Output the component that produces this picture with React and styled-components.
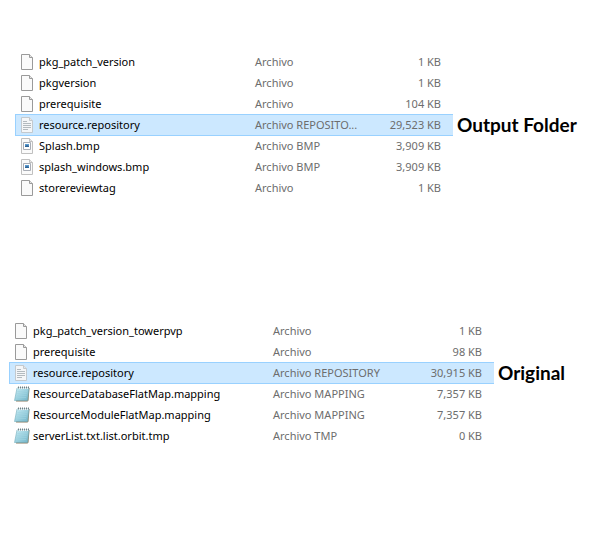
import styled, { createGlobalStyle } from "styled-components"

const GlobalStyle = createGlobalStyle`
  body {
    margin: 0;
    background: #fff;
    color: #000;
    font-family: "Noto Sans", "Open Sans", sans-serif;
    font-size: 11px;
  }
`

const Page = styled.main`
  display: flex;
  flex-direction: column;
  gap: 122px;
  padding: 51px 0;
`

const Panel = styled.section`
  display: flex;
  align-items: flex-start;
  padding-left: ${(props) => props.$inset}px;
`

const FileTable = styled.table`
  display: block;
  flex: 1;
  min-width: 0;
`

const Rows = styled.tbody`
  display: flex;
  flex-direction: column;
`

// neighbouring rows share one pixel, so the selection border overlaps them
const Row = styled.tr`
  display: flex;
  align-items: center;
  box-sizing: border-box;
  height: 22px;
  margin-bottom: -1px;
  border: 1px solid ${(props) => (props.$selected ? "#99d1ff" : "transparent")};
  border-right: none;
  background: ${(props) => (props.$selected ? "#cce8ff" : "transparent")};
`

const Cell = styled.td`
  box-sizing: border-box;
  padding: 0;
  line-height: 20px;
  white-space: nowrap;
  color: #6d6d6d;
`

const NameCell = styled(Cell)`
  display: flex;
  align-items: center;
  flex: 1;
  gap: 3px;
  padding-left: 4px;
  color: #000;

  svg {
    flex: none;
  }
`

const TypeCell = styled(Cell)`
  width: ${(props) => props.$width}px;
`

const SizeCell = styled(Cell)`
  width: 90px;
  padding-right: 12px;
  text-align: right;
`

const Label = styled.h2`
  flex: none;
  box-sizing: border-box;
  width: ${(props) => props.$width}px;
  margin: ${(props) => props.$row * 21}px 0 0;
  padding-left: 4px;
  font-family: Lato, "Open Sans", sans-serif;
  font-size: 19px;
  font-weight: 700;
  line-height: 22px;
  white-space: nowrap;
`

const Sheet = ({ stroke = "#9a9a9a", fill = "#fafafa", children }) => (
  <svg width="16" height="16" viewBox="0 0 16 16" aria-hidden="true">
    <path d="M1.5.5h8l3 3v12h-11z" fill={fill} stroke={stroke} />
    <path d="M9.5.5v3h3" fill="#e6e6e6" stroke={stroke} />
    {children}
  </svg>
)

const TextSheet = () => (
  <Sheet stroke="#c3c9ce" fill="#f4f6f8">
    <path d="M3 4.5h4M3 6.5h8M3 8.5h8M3 10.5h8M3 12.5h5" stroke="#b3babf" />
  </Sheet>
)

const ImageSheet = () => (
  <Sheet stroke="#c0c0c0">
    <path d="M3.5 4.5h7v7h-7z" fill="#fff" stroke="#a9adb5" />
    <path d="M5 6h4v3H5z" fill="#5b9bd0" />
    <path d="M5 8l2-1 2 1v1H5z" fill="#2f6496" />
  </Sheet>
)

const Notepad = () => (
  <svg width="16" height="16" viewBox="0 0 16 16" aria-hidden="true">
    <defs>
      <linearGradient id="cover" x1="0" y1="0" x2="1" y2="1">
        <stop offset="0" stopColor="#c9edf5" />
        <stop offset="1" stopColor="#6fb4c8" />
      </linearGradient>
    </defs>
    <path d="M4 2h11.500l-1 12.500-1 1H2z" fill="#8b7d62" />
    <path d="M3 2h12l-1.500 12.500H.5z" fill="url(#cover)" stroke="#76aebd" strokeWidth=".6" />
    <path d="M3.500 5.500h9.500M3.200 7.500h9.500M3 9.500h9.500M2.500 11.500h9.500" stroke="#9fd3e0" strokeWidth=".6" />
    <path d="M3.500 2.500h11" stroke="#e8f7fa" />
    <path d="M4.500.5v2M6.500.5v2M8.500.5v2M10.500.5v2M12.500.5v2M14.500.5v2" stroke="#56656b" strokeWidth=".8" />
  </svg>
)

const icons = { blank: Sheet, text: TextSheet, image: ImageSheet, notepad: Notepad }

const outputFiles = [
  { icon: "blank", name: "pkg_patch_version", type: "Archivo", size: "1 KB" },
  { icon: "blank", name: "pkgversion", type: "Archivo", size: "1 KB" },
  { icon: "blank", name: "prerequisite", type: "Archivo", size: "104 KB" },
  { icon: "text", name: "resource.repository", type: "Archivo REPOSITO...", size: "29,523 KB", selected: true },
  { icon: "image", name: "Splash.bmp", type: "Archivo BMP", size: "3,909 KB" },
  { icon: "image", name: "splash_windows.bmp", type: "Archivo BMP", size: "3,909 KB" },
  { icon: "blank", name: "storereviewtag", type: "Archivo", size: "1 KB" },
]

const originalFiles = [
  { icon: "blank", name: "pkg_patch_version_towerpvp", type: "Archivo", size: "1 KB" },
  { icon: "blank", name: "prerequisite", type: "Archivo", size: "98 KB" },
  { icon: "text", name: "resource.repository", type: "Archivo REPOSITORY", size: "30,915 KB", selected: true },
  { icon: "notepad", name: "ResourceDatabaseFlatMap.mapping", type: "Archivo MAPPING", size: "7,357 KB" },
  { icon: "notepad", name: "ResourceModuleFlatMap.mapping", type: "Archivo MAPPING", size: "7,357 KB" },
  { icon: "notepad", name: "serverList.txt.list.orbit.tmp", type: "Archivo TMP", size: "0 KB" },
]

const FileList = ({ id, title, files, inset, typeWidth, labelWidth }) => (
  <Panel $inset={inset}>
    <FileTable aria-labelledby={id} cellSpacing="0">
      <Rows>
        {files.map((file) => {
          const Icon = icons[file.icon]
          return (
            <Row key={file.name} $selected={file.selected}>
              <NameCell>
                <Icon />
                {file.name}
              </NameCell>
              <TypeCell $width={typeWidth}>{file.type}</TypeCell>
              <SizeCell>{file.size}</SizeCell>
            </Row>
          )
        })}
      </Rows>
    </FileTable>
    <Label id={id} $width={labelWidth} $row={files.findIndex((file) => file.selected)}>
      {title}
    </Label>
  </Panel>
)

const App = () => (
  <>
    <GlobalStyle />
    <Page>
      <FileList id="output" title="Output Folder" files={outputFiles} inset={15} typeWidth={108} labelWidth={153} />
      <FileList id="original" title="Original" files={originalFiles} inset={9} typeWidth={131} labelWidth={112} />
    </Page>
  </>
)

export default App
